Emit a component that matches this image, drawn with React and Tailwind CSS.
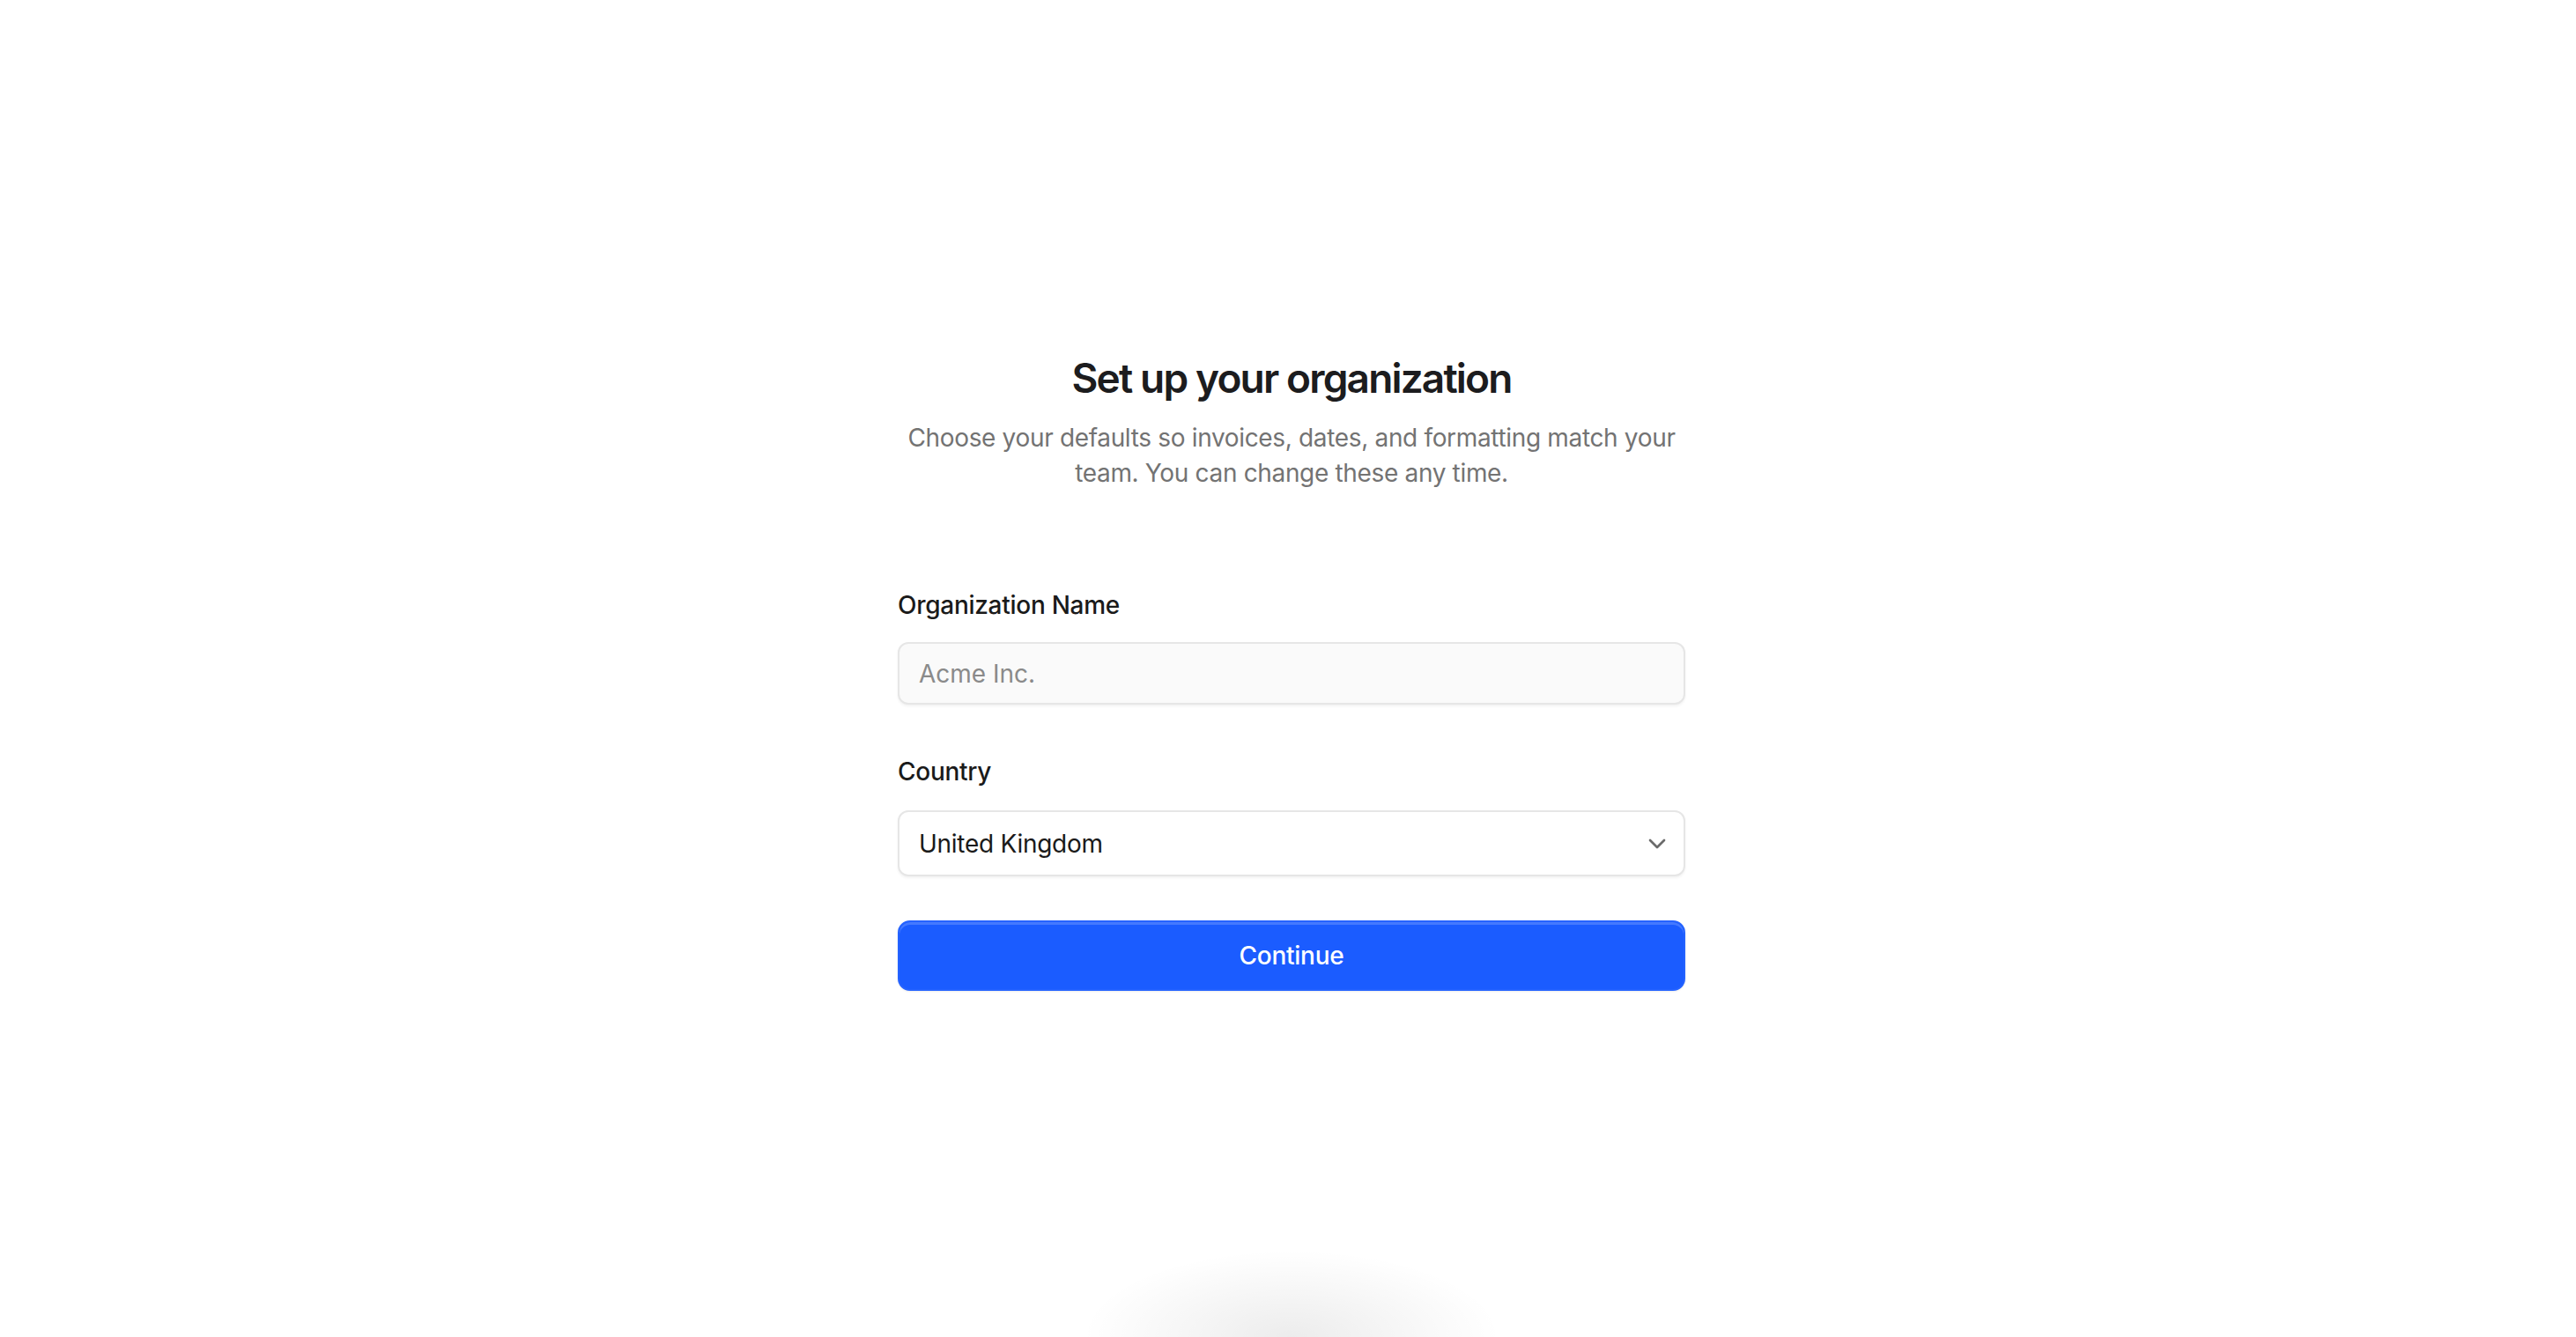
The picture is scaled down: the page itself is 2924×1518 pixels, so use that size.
import React from "react";

function ChevronDown() {
  return (
    <svg width="32" height="32" viewBox="0 0 24 24" fill="none" stroke="currentColor" strokeWidth="2" strokeLinecap="round" strokeLinejoin="round">
      <path d="m6 9 6 6 6-6" />
    </svg>
  );
}

export default function App() {
  return (
    <div className="relative min-h-screen w-full overflow-hidden bg-white font-['Inter','Noto_Sans',sans-serif] antialiased">
      <div className="flex min-h-screen items-center justify-center pl-[8px]">
        <div className="flex w-[894px] flex-col">
          <h1 className="pt-[4px] text-center text-[46px] leading-[64px] font-semibold tracking-[-0.04em] text-[#1c1c1e]">
            Set up your organization
          </h1>
          <p className="mt-[16px] text-center text-[28px] leading-[40px] tracking-[-0.012em] text-[#737373]">
            Choose your defaults so invoices, dates, and formatting match your team. You can change these any time.
          </p>

          <form className="mt-[110px] flex flex-col" onSubmit={(e) => e.preventDefault()}>
            <label className="text-[28px] leading-[40px] font-medium tracking-[-0.01em] text-[#1a1a1a]">Organization Name</label>
            <input
              type="text"
              placeholder="Acme Inc."
              className="mt-[22px] h-[71px] w-full rounded-[12px] border-2 border-[#e6e6e6] bg-[#fafafa] px-[22px] text-[28px] text-[#1a1a1a] placeholder:text-[#8a8a8a] shadow-[0_2px_3px_rgba(0,0,0,0.05)] outline-none"
            />

            <label className="mt-[56px] text-[28px] leading-[40px] font-medium tracking-[-0.01em] text-[#1a1a1a]">Country</label>
            <div className="mt-[24px] flex h-[75px] w-full items-center justify-between rounded-[12px] border-2 border-[#e6e6e6] bg-white pl-[22px] pr-[14px] shadow-[0_2px_3px_rgba(0,0,0,0.05)]">
              <span className="text-[28px] tracking-[-0.01em] text-[#1a1a1a]">United Kingdom</span>
              <span className="text-[#6b6b6b]">
                <ChevronDown />
              </span>
            </div>

            <button
              type="submit"
              className="mt-[50px] h-[80px] w-full rounded-[14px] border-2 border-[#2563ff] bg-[#1b5cff] text-[28px] font-medium tracking-[-0.01em] text-white shadow-[inset_0_3px_0_rgba(255,255,255,0.18),0_1px_2px_rgba(0,0,0,0.08)]"
            >
              Continue
            </button>
          </form>
        </div>
      </div>

      <div className="pointer-events-none absolute bottom-[-100px] left-1/2 h-[200px] w-[480px] translate-x-[-236px] rounded-full bg-[radial-gradient(ellipse_at_center,rgba(0,0,0,0.075),rgba(0,0,0,0.03)_40%,transparent_70%)]" />
    </div>
  );
}
